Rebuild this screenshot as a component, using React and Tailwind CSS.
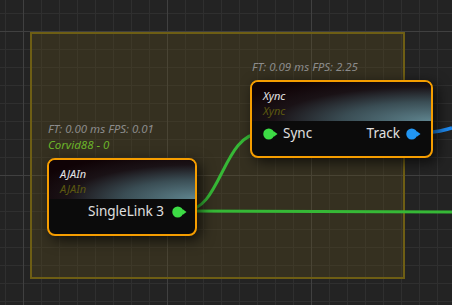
import React from "react";

function Grid() {
  return (
    <svg className="absolute inset-0" width="452" height="305">
      <defs>
        <pattern id="minor" x="5" y="13" width="18" height="18" patternUnits="userSpaceOnUse">
          <path d="M0.5 0V18M0 0.5H18" stroke="#2f2f2f" strokeWidth="1" fill="none" />
        </pattern>
        <pattern id="major" x="23" y="31" width="144" height="144" patternUnits="userSpaceOnUse">
          <path d="M0.5 0V144M0 0.5H144" stroke="#404040" strokeWidth="1" fill="none" />
        </pattern>
      </defs>
      <rect width="452" height="305" fill="#232323" />
      <rect width="452" height="305" fill="url(#minor)" />
      <rect width="452" height="305" fill="url(#major)" />
    </svg>
  );
}

function Wires() {
  return (
    <svg className="absolute inset-0" width="452" height="305">
      <path d="M184 211 C 222 211, 222 133, 262 133" stroke="#36b836" strokeWidth="3" fill="none" />
      <path d="M184 211 L 452 212" stroke="#36b836" strokeWidth="3" fill="none" />
      <path d="M419 133 C 435 133, 440 131, 452 128" stroke="#1e8af0" strokeWidth="3.5" fill="none" />
    </svg>
  );
}

function Port({ color }) {
  return (
    <svg width="15" height="12" viewBox="0 0 15 12" className="shrink-0">
      <circle cx="5.75" cy="6" r="5.5" fill={color} />
      <path d="M10.5 3 L14.5 6 L10.5 9 Z" fill={color} />
    </svg>
  );
}

function Node({ className, title, children }) {
  return (
    <div
      className={
        "absolute flex h-[78px] flex-col overflow-hidden rounded-[8px] border-2 border-[#f59d00] bg-[#0b0b0b] shadow-[4px_4px_14px_rgba(0,0,0,0.7)] " +
        className
      }
    >
      <div className="flex h-[39px] shrink-0 flex-col justify-center bg-[radial-gradient(ellipse_at_100%_100%,#5f848e_0%,#3a4d54_35%,#1a1216_62%,#100306_85%)] pl-[11px] pt-[2px] italic leading-[15px]">
        <span className="text-[11px] text-[#e4e4e4]">{title}</span>
        <span className="text-[11px] text-[#5c5810]">{title}</span>
      </div>
      <div className="flex flex-1 items-start pt-[3px]">{children}</div>
    </div>
  );
}

export default function App() {
  return (
    <div
      className="relative h-[305px] w-[452px] overflow-hidden bg-[#232323]"
      style={{ fontFamily: '"Noto Sans", "Open Sans", sans-serif' }}
    >
      <Grid />
      <div className="absolute left-[30px] top-[32px] h-[247px] w-[375px] border-2 border-[#6e5e14] bg-[rgba(95,78,25,0.3)]" />
      <Wires />

      <div className="absolute left-[48px] top-[121px] flex flex-col text-[11.5px] italic leading-[16px]">
        <span className="text-[#8c8c8c]">FT: 0.00 ms FPS: 0.01</span>
        <span className="text-[#6cb52a]">Corvid88 - 0</span>
      </div>
      <div className="absolute left-[252px] top-[59px] text-[11.5px] italic leading-[16px] text-[#8c8c8c]">
        FT: 0.09 ms FPS: 2.25
      </div>

      <Node className="left-[47px] top-[158px] w-[150px]" title="AJAIn">
        <div className="flex w-full items-center justify-end gap-[8px] pr-[8px]">
          <span className="text-[13.5px] leading-[19px] text-[#e0e0e0]">SingleLink 3</span>
          <Port color="#3ddc45" />
        </div>
      </Node>

      <Node className="left-[250px] top-[80px] w-[183px]" title="Xync">
        <div className="flex w-full items-center justify-between pl-[11px] pr-[10px]">
          <div className="flex items-center gap-[5px]">
            <Port color="#3ddc45" />
            <span className="text-[13.5px] leading-[19px] text-[#e0e0e0]">Sync</span>
          </div>
          <div className="flex items-center gap-[6px]">
            <span className="text-[13.5px] leading-[19px] text-[#e0e0e0]">Track</span>
            <Port color="#2196f3" />
          </div>
        </div>
      </Node>
    </div>
  );
}
